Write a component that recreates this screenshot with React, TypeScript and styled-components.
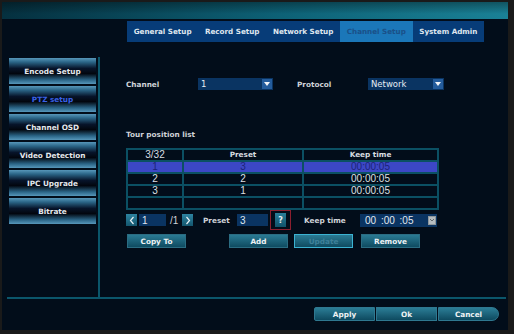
import React from 'react';
import styled, { createGlobalStyle } from 'styled-components';

const GlobalStyle = createGlobalStyle`
  html, body {
    margin: 0;
    padding: 0;
    background: #1a1a1a;
  }
  body {
    font-family: "DejaVu Sans", Verdana, sans-serif;
  }
`;

const Frame = styled.div`
  width: 514px;
  height: 334px;
  box-sizing: border-box;
  padding: 2px 6px 4px 2px;
  background: #1a1a1a;
`;

const Panel = styled.div`
  height: 100%;
  background: #020d1a;
  display: flex;
  flex-direction: column;
`;

const TitleBar = styled.div`
  height: 17px;
  flex-shrink: 0;
  background: linear-gradient(180deg, rgba(0, 0, 0, 0.35), rgba(0, 0, 0, 0) 70%),
    linear-gradient(90deg, #05303f, #0d6176 55%, #1a8196);
`;

const TabRow = styled.nav`
  display: flex;
  height: 21px;
  margin: 2px 0 0 125px;
`;

const Tab = styled.div<{ $active?: boolean }>`
  display: flex;
  align-items: center;
  padding: 0 6.7px;
  font-size: 7.2px;
  font-weight: bold;
  white-space: nowrap;
  background: ${({ $active }) => ($active ? '#1b77b9' : '#073c78')};
  color: ${({ $active }) => ($active ? '#1a5088' : '#dfe6ee')};
`;

const Body = styled.div`
  display: flex;
  height: 240px;
  margin-top: 15px;
  padding-left: 7px;
`;

const Sidebar = styled.div`
  width: 87px;
  padding-top: 1px;
`;

const SideButton = styled.div<{ $active?: boolean }>`
  height: 26px;
  margin-bottom: 2px;
  display: flex;
  align-items: center;
  justify-content: center;
  font-size: 7.3px;
  font-weight: bold;
  color: ${({ $active }) => ($active ? '#3a62e8' : '#e4e8ec')};
  background: linear-gradient(
    180deg,
    #5797ba 0%,
    #2a6486 16%,
    #07142a 40%,
    #02060e 60%,
    #2a6486 84%,
    #5797ba 100%
  );
`;

const VDivider = styled.div`
  width: 2px;
  margin-left: 2px;
  background: #0b566b;
`;

const Content = styled.div`
  flex: 1;
  display: flex;
  flex-direction: column;
  padding: 21px 0 0 26px;
`;

const Row = styled.div`
  display: flex;
  align-items: center;
`;

const Label = styled.span<{ $w?: number; $ml?: number }>`
  display: inline-block;
  width: ${({ $w }) => ($w ? `${$w}px` : 'auto')};
  margin-left: ${({ $ml }) => $ml || 0}px;
  font-size: 7.3px;
  font-weight: bold;
  color: #cfd3d8;
  white-space: nowrap;
`;

const Select = styled.div<{ $w: number }>`
  width: ${({ $w }) => $w}px;
  height: 12px;
  box-sizing: border-box;
  padding-left: 3px;
  display: flex;
  align-items: center;
  justify-content: space-between;
  background: #0a3462;
  color: #e6ecf2;
  font-size: 8.5px;
`;

const Arrow = styled.span`
  width: 10px;
  height: 10px;
  margin-right: 1px;
  background: #245c9c;
  display: flex;
  align-items: center;
  justify-content: center;

  &::after {
    content: '';
    border-left: 3.5px solid transparent;
    border-right: 3.5px solid transparent;
    border-top: 4px solid #f2f4f8;
  }
`;

const SectionTitle = styled.div`
  margin-top: 40px;
  height: 10px;
  line-height: 10px;
  font-size: 7.3px;
  font-weight: bold;
  color: #cfd3d8;
`;

const Table = styled.table`
  margin-top: 8px;
  width: 311px;
  border-collapse: collapse;
  table-layout: fixed;
`;

const Cell = styled.td<{ $head?: boolean }>`
  height: 10px;
  padding: 0;
  border: 2px solid #0b5063;
  text-align: center;
  line-height: 10px;
  font-family: ${({ $head }) =>
    $head ? '"DejaVu Sans", Verdana, sans-serif' : '"Liberation Sans", Arial, sans-serif'};
  font-size: ${({ $head }) => ($head ? '7.3px' : '10px')};
  font-weight: ${({ $head }) => ($head ? 'bold' : 'normal')};
  color: #d8dce0;
`;

const NumCell = styled(Cell)`
  font-family: "Liberation Sans", Arial, sans-serif;
  font-size: 10px;
  font-weight: normal;
`;

const TRow = styled.tr<{ $selected?: boolean }>`
  background: ${({ $selected }) => ($selected ? '#3c47c6' : 'transparent')};

  td {
    color: ${({ $selected }) => ($selected ? '#1c2478' : '#dde0e4')};
  }
`;

const ControlRow = styled.div`
  display: flex;
  align-items: center;
  height: 20px;
`;

const NavButton = styled.div<{ $ml?: number }>`
  width: 11px;
  height: 12px;
  margin-left: ${({ $ml }) => $ml || 0}px;
  background: linear-gradient(180deg, #2d83a0, #14566e);
  display: flex;
  align-items: center;
  justify-content: center;
`;

const Input = styled.div<{ $w: number; $ml?: number }>`
  width: ${({ $w }) => $w}px;
  height: 12px;
  margin-left: ${({ $ml }) => $ml || 0}px;
  box-sizing: border-box;
  padding-left: 3px;
  display: flex;
  align-items: center;
  background: #0a3462;
  color: #dfe6ee;
  font-family: "Liberation Sans", Arial, sans-serif;
  font-size: 10px;
`;

const PageText = styled.span`
  width: 16px;
  box-sizing: border-box;
  padding-left: 4px;
  color: #cfd3d8;
  font-family: "Liberation Sans", Arial, sans-serif;
  font-size: 10px;
`;

const FocusBox = styled.div`
  width: 21px;
  height: 20px;
  margin-left: 2px;
  box-sizing: border-box;
  border: 1px solid #8c1f2f;
  display: flex;
  align-items: center;
  justify-content: center;
`;

const HelpButton = styled.div`
  width: 11px;
  height: 14px;
  background: linear-gradient(180deg, #2a7e99, #10526a);
  color: #e8eef2;
  font-size: 8px;
  font-weight: bold;
  display: flex;
  align-items: center;
  justify-content: center;
`;

const TimeInput = styled.div`
  width: 77px;
  height: 13px;
  box-sizing: border-box;
  padding: 0 1px 0 5px;
  display: flex;
  align-items: center;
  justify-content: space-between;
  background: #0a3462;
  color: #e2e8ee;
  font-family: "Liberation Sans", Arial, sans-serif;
  font-size: 10px;
  white-space: pre;
  word-spacing: 2px;
`;

const ButtonRow = styled.div`
  display: flex;
  margin-top: 4px;
`;

const ActionButton = styled.button<{ $ml?: number; $focus?: boolean }>`
  width: 59px;
  height: 14px;
  margin-left: ${({ $ml }) => $ml || 0}px;
  padding: 0;
  box-sizing: border-box;
  border: 1px solid ${({ $focus }) => ($focus ? '#3bb2d2' : '#2b6c82')};
  background: linear-gradient(180deg, #2a7a93, #0f4b61);
  color: ${({ $focus }) => ($focus ? '#3f8099' : '#eef2f4')};
  font-family: "DejaVu Sans", Verdana, sans-serif;
  font-size: 7.3px;
  font-weight: bold;
`;

const HLine = styled.div`
  height: 2px;
  margin: 0 2px 0 5px;
  background: #0b566b;
`;

const Footer = styled.div`
  display: flex;
  justify-content: flex-end;
  gap: 1px;
  padding: 8px 9px 0 0;
`;

const FooterButton = styled.button<{ $edge?: 'left' | 'right' }>`
  width: 61px;
  height: 14px;
  padding: 0;
  box-sizing: border-box;
  border: 1px solid #2f7890;
  border-radius: ${({ $edge }) =>
    $edge === 'right' ? '0 7px 7px 0' : $edge === 'left' ? '2px 0 0 2px' : '0'};
  background: linear-gradient(180deg, #2b7d96, #0e4a60);
  color: #eef2f4;
  font-family: "DejaVu Sans", Verdana, sans-serif;
  font-size: 7.3px;
  font-weight: bold;
`;

const Chevron = ({ dir }: { dir: 'left' | 'right' }) => (
  <svg width="6" height="9" viewBox="0 0 6 9">
    <path
      d={dir === 'left' ? 'M4.5 1 L1.5 4.5 L4.5 8' : 'M1.5 1 L4.5 4.5 L1.5 8'}
      fill="none"
      stroke="#e8f0f4"
      strokeWidth="1.2"
    />
  </svg>
);

const ClockIcon = () => (
  <svg width="8" height="9" viewBox="0 0 8 9">
    <rect x="0" y="0" width="8" height="9" fill="#8f979c" />
    <rect x="1" y="1" width="6" height="7" fill="#b5bcc0" />
    <path d="M2 3 L4 5 L6 3" fill="none" stroke="#5f676c" strokeWidth="1" />
  </svg>
);

const menu = ['Encode Setup', 'PTZ setup', 'Channel OSD', 'Video Detection', 'IPC Upgrade', 'Bitrate'];
const tabs = ['General Setup', 'Record Setup', 'Network Setup', 'Channel Setup', 'System Admin'];
const tour = [
  { no: '1', preset: '3', time: '00:00:05' },
  { no: '2', preset: '2', time: '00:00:05' },
  { no: '3', preset: '1', time: '00:00:05' },
];

const App = () => {
  return (
    <>
      <GlobalStyle />
      <Frame>
        <Panel>
          <TitleBar />
          <TabRow>
            {tabs.map((t) => (
              <Tab key={t} $active={t === 'Channel Setup'}>
                {t}
              </Tab>
            ))}
          </TabRow>
          <Body>
            <Sidebar>
              {menu.map((m) => (
                <SideButton key={m} $active={m === 'PTZ setup'}>
                  {m}
                </SideButton>
              ))}
            </Sidebar>
            <VDivider />
            <Content>
              <Row>
                <Label $w={72}>Channel</Label>
                <Select $w={75}>
                  1<Arrow />
                </Select>
                <Label $w={71} $ml={24}>
                  Protocol
                </Label>
                <Select $w={76}>
                  Network<Arrow />
                </Select>
              </Row>

              <SectionTitle>Tour position list</SectionTitle>

              <Table>
                <colgroup>
                  <col style={{ width: 56 }} />
                  <col style={{ width: 120 }} />
                  <col style={{ width: 135 }} />
                </colgroup>
                <tbody>
                  <tr>
                    <NumCell>3/32</NumCell>
                    <Cell $head>Preset</Cell>
                    <Cell $head>Keep time</Cell>
                  </tr>
                  {tour.map((r, i) => (
                    <TRow key={r.no} $selected={i === 0}>
                      <Cell>{r.no}</Cell>
                      <Cell>{r.preset}</Cell>
                      <Cell>{r.time}</Cell>
                    </TRow>
                  ))}
                  <TRow>
                    <Cell />
                    <Cell />
                    <Cell />
                  </TRow>
                </tbody>
              </Table>

              <ControlRow>
                <NavButton>
                  <Chevron dir="left" />
                </NavButton>
                <Input $w={27} $ml={2}>
                  1
                </Input>
                <PageText>/1</PageText>
                <NavButton>
                  <Chevron dir="right" />
                </NavButton>
                <Label $w={34} $ml={10}>
                  Preset
                </Label>
                <Input $w={31}>3</Input>
                <FocusBox>
                  <HelpButton>?</HelpButton>
                </FocusBox>
                <Label $w={56} $ml={13}>
                  Keep time
                </Label>
                <TimeInput>
                  {'00 :00 :05'}
                  <ClockIcon />
                </TimeInput>
              </ControlRow>

              <ButtonRow>
                <ActionButton $ml={1}>Copy To</ActionButton>
                <ActionButton $ml={43}>Add</ActionButton>
                <ActionButton $ml={6} $focus>
                  Update
                </ActionButton>
                <ActionButton $ml={8}>Remove</ActionButton>
              </ButtonRow>
            </Content>
          </Body>
          <HLine />
          <Footer>
            <FooterButton $edge="left">Apply</FooterButton>
            <FooterButton>Ok</FooterButton>
            <FooterButton $edge="right">Cancel</FooterButton>
          </Footer>
        </Panel>
      </Frame>
    </>
  );
};

export default App;
